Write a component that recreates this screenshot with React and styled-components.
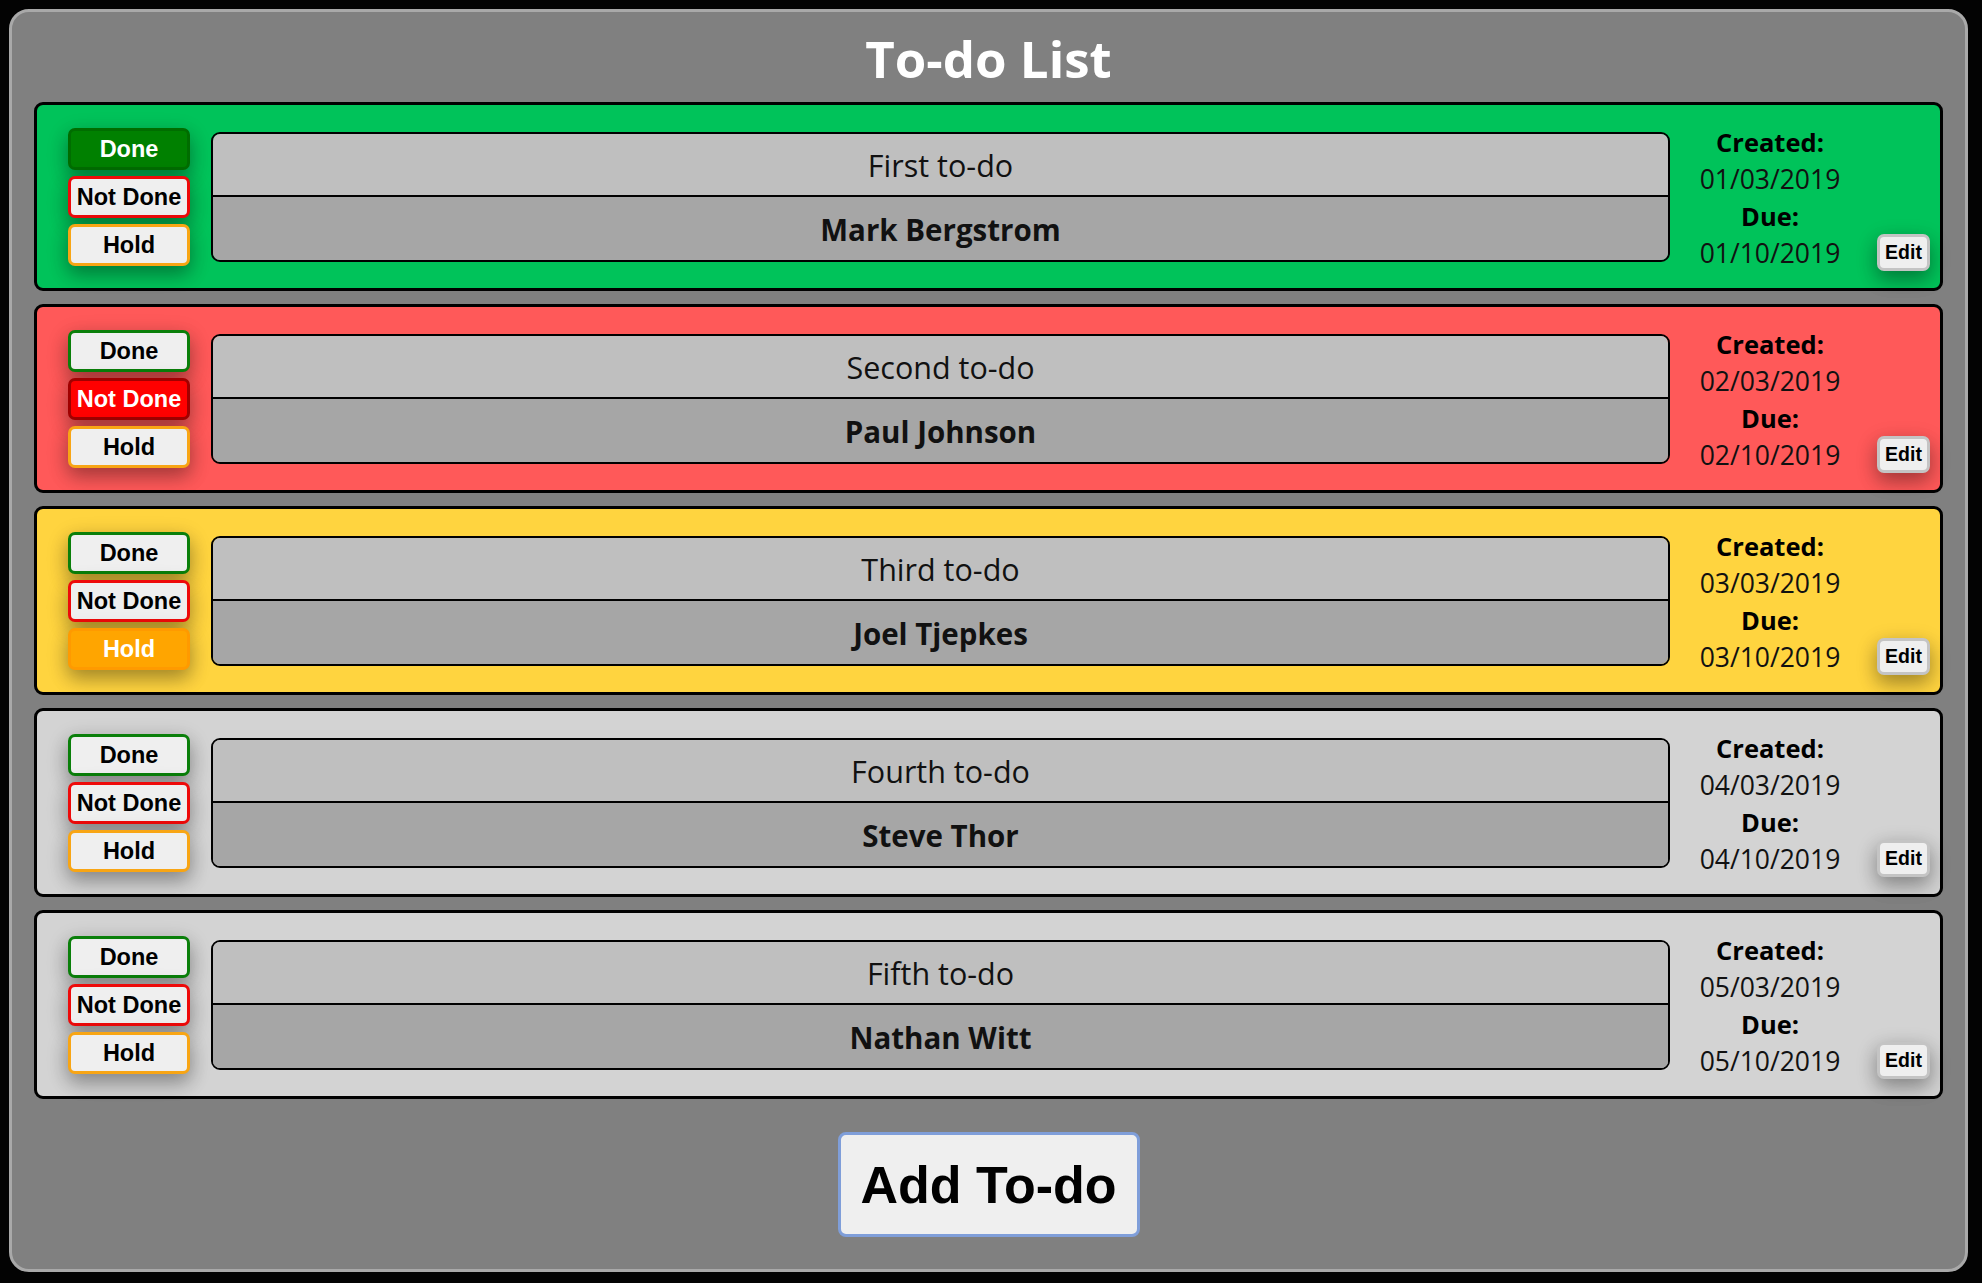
import React from "react";
import styled, { createGlobalStyle } from "styled-components";

const GlobalStyle = createGlobalStyle`
  html, body {
    margin: 0;
    padding: 0;
    background: #030303;
  }
  body {
    font-family: "Open Sans", "Noto Sans", sans-serif;
  }
`;

const Page = styled.div`
  padding: 9px 14px 11px 9px;
  min-height: 1283px;
  box-sizing: border-box;
`;

const Panel = styled.main`
  box-sizing: border-box;
  height: 1263px;
  border: 3px solid #a9a9a9;
  border-radius: 20px;
  background: #808080;
  padding: 16px 22px 32px;
  display: flex;
  flex-direction: column;
  align-items: stretch;
`;

const Title = styled.h1`
  margin: 0;
  text-align: center;
  color: #ffffff;
  font-family: "Open Sans", "Noto Sans", sans-serif;
  font-weight: 700;
  font-size: 51px;
  line-height: 61px;
`;

const List = styled.div`
  margin-top: 13px;
  display: flex;
  flex-direction: column;
  gap: 13px;
`;

const cardColors = {
  done: "#00c35a",
  notdone: "#ff5959",
  hold: "#ffd43f",
  none: "#d3d3d3",
};

const Card = styled.section`
  box-sizing: border-box;
  height: 189px;
  border: 3px solid #000;
  border-radius: 9px;
  background: ${(p) => cardColors[p.$status]};
  display: flex;
  align-items: center;
  padding: 0 10px 0 31px;
`;

const StatusColumn = styled.div`
  display: flex;
  flex-direction: column;
  gap: 6px;
  width: 122px;
  flex: none;
`;

const variants = {
  done: { border: "#0a7f0a", activeBg: "#008000", activeBorder: "#006d00" },
  notdone: { border: "#ee0a0a", activeBg: "#ff0000", activeBorder: "#a10000" },
  hold: { border: "#f8a514", activeBg: "#ffa500", activeBorder: "#ff9a00" },
};

const StatusButton = styled.button`
  box-sizing: border-box;
  width: 122px;
  height: 42px;
  padding: 0;
  border: 3px solid
    ${(p) => (p.$active ? variants[p.$kind].activeBorder : variants[p.$kind].border)};
  border-radius: 7px;
  background: ${(p) => (p.$active ? variants[p.$kind].activeBg : "#efefef")};
  color: ${(p) => (p.$active ? "#ffffff" : "#000000")};
  font-family: "Liberation Sans", Arial, sans-serif;
  font-weight: 700;
  font-size: 23.5px;
  line-height: 36px;
  white-space: nowrap;
  box-shadow: 0 9px 18px 0 rgba(0, 0, 0, 0.22), 0 6px 22px 0 rgba(0, 0, 0, 0.2);
  cursor: pointer;
`;

const TextBox = styled.div`
  box-sizing: border-box;
  flex: 1;
  margin-left: 21px;
  height: 130px;
  border: 2px solid #000;
  border-radius: 9px;
  overflow: hidden;
  display: flex;
  flex-direction: column;
`;

const TaskLine = styled.div`
  flex: 1;
  display: flex;
  align-items: center;
  justify-content: center;
  padding-top: 2px;
  background: #bfbfbf;
  border-bottom: 2px solid #000;
  color: #111;
  font-family: "Open Sans", "Noto Sans", sans-serif;
  font-size: 30.5px;
  font-weight: 400;
`;

const OwnerLine = styled.div`
  flex: 1;
  display: flex;
  align-items: center;
  justify-content: center;
  padding-top: 3px;
  background: #a6a6a6;
  color: #111;
  font-family: "Open Sans", "Noto Sans", sans-serif;
  font-size: 29.5px;
  font-weight: 700;
`;

const Dates = styled.div`
  width: 200px;
  flex: none;
  padding-top: 3px;
  text-align: center;
  color: #111;
  font-family: "Open Sans", "Noto Sans", sans-serif;
  line-height: 37px;
`;

const DateLabel = styled.div`
  font-weight: 700;
  font-size: 25.5px;
  color: #000;
`;

const DateValue = styled.div`
  font-weight: 400;
  font-size: 26.5px;
`;

const EditButton = styled.button`
  box-sizing: border-box;
  flex: none;
  align-self: flex-end;
  margin: 0 0 17px 7px;
  width: 53px;
  height: 37px;
  padding: 0;
  border: 3px solid #c4c4c4;
  border-radius: 7px;
  background: #efefef;
  color: #000;
  font-family: "Liberation Sans", Arial, sans-serif;
  font-weight: 700;
  font-size: 19.5px;
  box-shadow: 0 9px 18px 0 rgba(0, 0, 0, 0.22), 0 6px 22px 0 rgba(0, 0, 0, 0.2);
  cursor: pointer;
`;

const Footer = styled.div`
  margin-top: 33px;
  display: flex;
  justify-content: center;
`;

const AddButton = styled.button`
  box-sizing: border-box;
  width: 302px;
  height: 105px;
  padding: 0;
  border: 3px solid #7f9ed9;
  border-radius: 8px;
  background: #efefef;
  color: #000;
  font-family: "Liberation Sans", Arial, sans-serif;
  font-weight: 700;
  font-size: 52px;
  cursor: pointer;
`;

const todos = [
  { title: "First to-do", owner: "Mark Bergstrom", created: "01/03/2019", due: "01/10/2019", status: "done" },
  { title: "Second to-do", owner: "Paul Johnson", created: "02/03/2019", due: "02/10/2019", status: "notdone" },
  { title: "Third to-do", owner: "Joel Tjepkes", created: "03/03/2019", due: "03/10/2019", status: "hold" },
  { title: "Fourth to-do", owner: "Steve Thor", created: "04/03/2019", due: "04/10/2019", status: "none" },
  { title: "Fifth to-do", owner: "Nathan Witt", created: "05/03/2019", due: "05/10/2019", status: "none" },
];

function TodoCard({ todo }) {
  return (
    <Card $status={todo.status}>
      <StatusColumn>
        <StatusButton $kind="done" $active={todo.status === "done"}>Done</StatusButton>
        <StatusButton $kind="notdone" $active={todo.status === "notdone"}>Not Done</StatusButton>
        <StatusButton $kind="hold" $active={todo.status === "hold"}>Hold</StatusButton>
      </StatusColumn>
      <TextBox>
        <TaskLine>{todo.title}</TaskLine>
        <OwnerLine>{todo.owner}</OwnerLine>
      </TextBox>
      <Dates>
        <DateLabel>Created:</DateLabel>
        <DateValue>{todo.created}</DateValue>
        <DateLabel>Due:</DateLabel>
        <DateValue>{todo.due}</DateValue>
      </Dates>
      <EditButton>Edit</EditButton>
    </Card>
  );
}

export default function App() {
  return (
    <>
      <GlobalStyle />
      <Page>
        <Panel>
          <Title>To-do List</Title>
          <List>
            {todos.map((t) => (
              <TodoCard key={t.title} todo={t} />
            ))}
          </List>
          <Footer>
            <AddButton>Add To-do</AddButton>
          </Footer>
        </Panel>
      </Page>
    </>
  );
}
